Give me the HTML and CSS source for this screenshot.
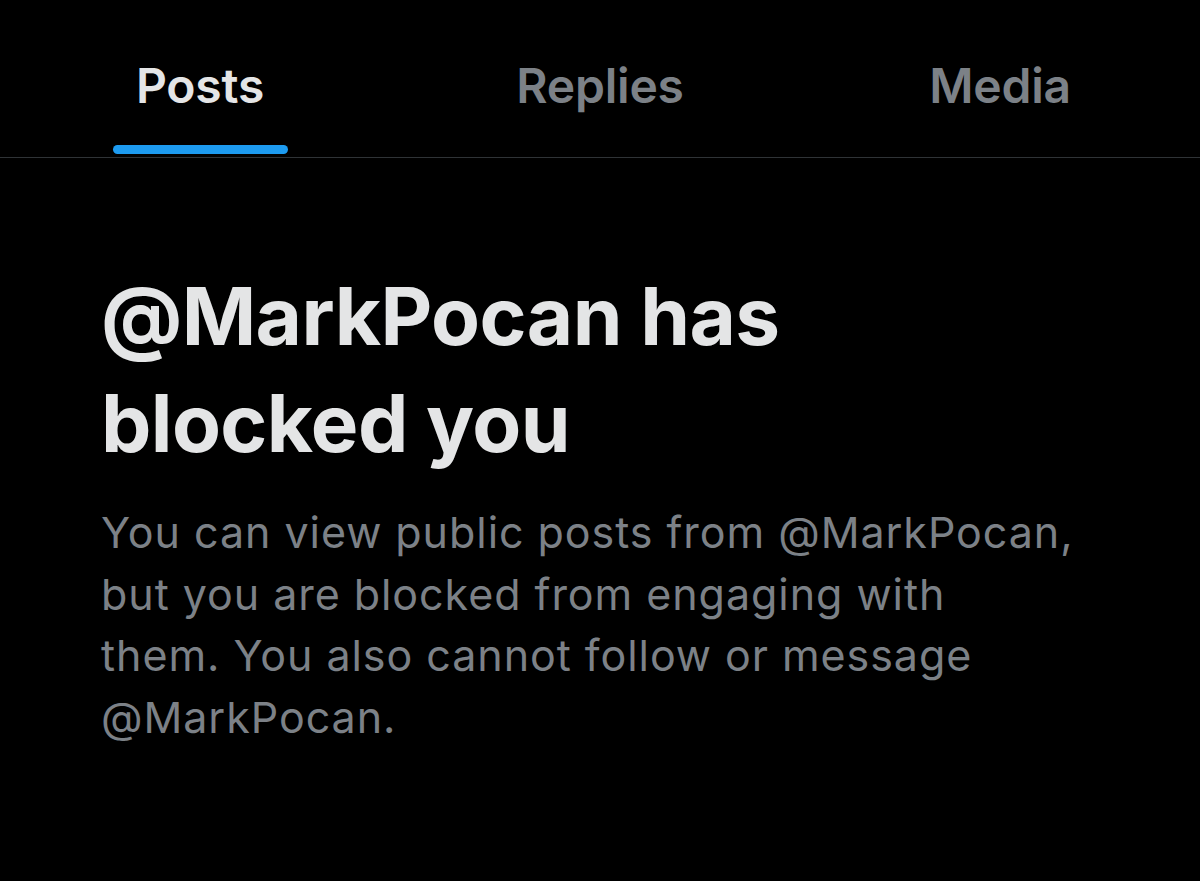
FILE: index.html
```html
<!DOCTYPE html>
<html lang="en">
<head>
<meta charset="utf-8">
<title>@MarkPocan has blocked you</title>
<link rel="stylesheet" href="styles.css">
</head>
<body>
<nav class="tabs">
  <a class="tab tab-active" href="#"><span class="tab-label">Posts</span><span class="tab-indicator"></span></a>
  <a class="tab" href="#"><span class="tab-label">Replies</span><span class="tab-indicator"></span></a>
  <a class="tab" href="#"><span class="tab-label">Media</span><span class="tab-indicator"></span></a>
</nav>
<main class="blocked">
  <h1 class="blocked-title">@MarkPocan has<br>blocked you</h1>
  <p class="blocked-text">You can view public posts from @MarkPocan,<br>but you are blocked from engaging with<br>them. You also cannot follow or message<br>@MarkPocan.</p>
</main>
</body>
</html>
```
FILE: styles.css
```css
html, body {
  margin: 0;
  padding: 0;
  background: #000;
}
body {
  font-family: Inter, "Noto Sans", "Liberation Sans", sans-serif;
  color: #e7e9ea;
  height: 881px;
  overflow: hidden;
}
.tabs {
  display: grid;
  grid-template-columns: repeat(3, 1fr);
  height: 157px;
  border-bottom: 1px solid #2f3336;
}
.tab {
  display: flex;
  flex-direction: column;
  align-items: center;
  justify-content: space-between;
  padding-top: 62px;
  padding-bottom: 3px;
  text-decoration: none;
  color: #7c8187;
}
.tab-label {
  font-size: 48px;
  font-weight: 600;
  line-height: 1;
  letter-spacing: -0.2px;
}
.tab-indicator {
  width: 175px;
  height: 9px;
  border-radius: 5px;
  background: transparent;
}
.tab-active {
  color: #e4e5e6;
}
.tab-active .tab-indicator {
  background: #1d9bf0;
}
.blocked {
  padding: 104px 100px 0 101px;
}
.blocked-title {
  margin: 0;
  font-size: 80px;
  font-weight: 700;
  line-height: 107px;
  color: #e4e5e6;
  letter-spacing: -0.6px;
}
.blocked-text {
  margin: 26px 0 0;
  font-size: 43px;
  font-weight: 400;
  line-height: 61.5px;
  color: #7c8187;
  letter-spacing: 0.95px;
  white-space: nowrap;
}
```
